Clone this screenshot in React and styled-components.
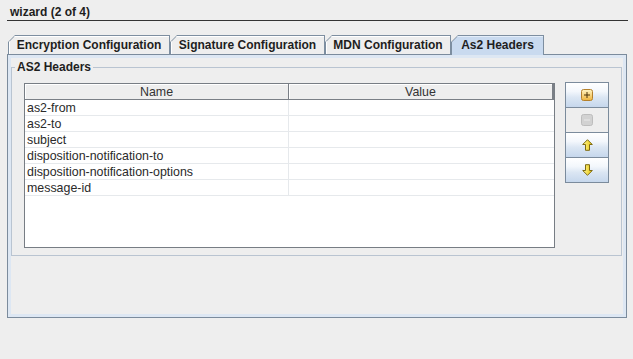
import React from 'react';
import styled, { createGlobalStyle } from 'styled-components';

const Global = createGlobalStyle`
  html, body { margin: 0; padding: 0; background: #eeeeee; }
  body { font-family: "Liberation Sans", Arial, sans-serif; font-size: 12px; color: #222; }
  * { box-sizing: border-box; }
`;

const Window = styled.div`
  width: 633px;
  height: 359px;
  background: #eeeeee;
  padding-left: 7px;
  overflow: hidden;
`;

const Title = styled.div`
  width: 621px;
  height: 21px;
  border-bottom: 1px solid #333333;
  padding: 5px 0 0 3px;
  line-height: 14px;
  font-weight: bold;
  color: #1e1e1e;
`;

const TabRow = styled.div`
  display: flex;
  align-items: flex-end;
  margin: 14px 0 0 1px;
  height: 19px;
`;

const Tab = styled.div`
  position: relative;
  z-index: ${p => (p.$selected ? 2 : 1)};
  width: ${p => p.$w}px;
  height: ${p => (p.$selected ? 20 : 19)}px;
  margin-bottom: ${p => (p.$selected ? -1 : 0)}px;
  padding: 1px 1px 0 1px;
  background: #7d8ea0;
  clip-path: polygon(0 7px, 7px 0, 100% 0, 100% 100%, 0 100%);
`;

const TabFace = styled.div`
  height: 100%;
  background: ${p => (p.$selected ? '#c9daef' : '#eeeeee')};
  clip-path: polygon(0 6px, 6px 0, 100% 0, 100% 100%, 0 100%);
  padding-top: 2px;
  line-height: 14px;
  font-weight: bold;
  text-align: center;
  color: #1e1e1e;
  white-space: nowrap;
  ${p => (p.$selected ? 'box-shadow: inset 0 1px 0 #e4eefa;' : 'box-shadow: inset 1px 1px 0 #ffffff;')}
`;

const Panel = styled.div`
  width: 620px;
  height: 264px;
  border: 1px solid #7b8b9c;
  padding: 3px;
  background: #eeeeee;
  box-shadow: inset 0 0 0 3px #dde7f3;
`;

const Group = styled.fieldset`
  margin: 2px 1px 0 0;
  padding: 0;
  border: 1px solid #b9c4d1;
  min-width: 0;
`;

const Legend = styled.legend`
  margin-left: 3px;
  padding: 0 2px;
  line-height: 14px;
  font-weight: bold;
  color: #1e1e1e;
`;

const GroupBody = styled.div`
  display: flex;
  align-items: flex-start;
  gap: 10px;
  padding: 9px 12px 7px 12px;
`;

const TableBox = styled.div`
  width: 531px;
  height: 165px;
  border: 1px solid #777d84;
  background: #ffffff;
  display: flex;
  flex-direction: column;
`;

const Grid = styled.div`
  display: grid;
  grid-template-columns: 264px 265px;
`;

const HeadCell = styled.div`
  height: 16px;
  background: #eeeeee;
  border-bottom: 1px solid #7a7f86;
  border-right: ${p => (p.$last ? 2 : 1)}px solid #7a7f86;
  box-shadow: inset 1px 1px 0 #ffffff;
  padding-top: 1px;
  line-height: 14px;
  font-size: 12.4px;
  text-align: center;
  color: #333333;
`;

const Cell = styled.div`
  height: 16px;
  border-bottom: 1px solid #e6e9ec;
  border-right: ${p => (p.$last ? 0 : 1)}px solid #e6e9ec;
  padding: 1px 0 0 2px;
  line-height: 14px;
  font-size: 12.4px;
  color: #2a2a2a;
  white-space: nowrap;
  overflow: hidden;
`;

const ButtonColumn = styled.div`
  display: flex;
  flex-direction: column;
  margin-top: -1px;
  width: 44px;
`;

const ToolButton = styled.button`
  width: 44px;
  height: 26px;
  margin: 0;
  padding: 0;
  border: 1px solid #7b8b9c;
  display: flex;
  align-items: center;
  justify-content: center;
  background: ${p =>
    p.disabled
      ? '#eeeeee'
      : 'linear-gradient(to bottom, #ffffff 0%, #f3f7fc 35%, #dbe6f3 60%, #c6d7ec 100%)'};
  & + & {
    border-top: 0;
    height: 25px;
  }
`;

const PlusIcon = () => (
  <svg width="12" height="12" viewBox="0 0 12 12">
    <defs>
      <linearGradient id="pg" x1="0" y1="0" x2="0" y2="1">
        <stop offset="0" stopColor="#fff4c4" />
        <stop offset="1" stopColor="#efb43c" />
      </linearGradient>
    </defs>
    <rect x="0.5" y="0.5" width="11" height="11" rx="2" fill="url(#pg)" stroke="#b4802c" />
    <path d="M6 3v6M3 6h6" stroke="#4a3208" strokeWidth="1" />
  </svg>
);

const MinusIcon = () => (
  <svg width="12" height="12" viewBox="0 0 12 12">
    <rect x="0.5" y="0.5" width="11" height="11" rx="2" fill="#d2d2d2" stroke="#bdbdbd" />
    <path d="M3 6h6" stroke="#e9e9e9" strokeWidth="1" />
  </svg>
);

const ArrowIcon = ({ down }) => (
  <svg width="11" height="12" viewBox="0 0 11 12" style={down ? { transform: 'scaleY(-1)' } : undefined}>
    <defs>
      <linearGradient id={down ? 'ag2' : 'ag1'} x1="0" y1="0" x2="1" y2="0">
        <stop offset="0" stopColor="#fff9a0" />
        <stop offset="1" stopColor="#e8c200" />
      </linearGradient>
    </defs>
    <path
      d="M5.5 0.7 L10.3 5.5 H7.5 V11.3 H3.5 V5.5 H0.7 Z"
      fill={`url(#${down ? 'ag2' : 'ag1'})`}
      stroke="#7d6a12"
      strokeWidth="1"
      strokeLinejoin="round"
    />
  </svg>
);

const tabs = [
  { label: 'Encryption Configuration', w: 162 },
  { label: 'Signature Configuration', w: 155 },
  { label: 'MDN Configuration', w: 126 },
  { label: 'As2 Headers', w: 93, selected: true },
];

const rows = [
  'as2-from',
  'as2-to',
  'subject',
  'disposition-notification-to',
  'disposition-notification-options',
  'message-id',
];

export default function App() {
  return (
    <>
      <Global />
      <Window>
        <Title>wizard (2 of 4)</Title>
        <TabRow>
          {tabs.map(t => (
            <Tab key={t.label} $w={t.w} $selected={t.selected}>
              <TabFace $selected={t.selected}>{t.label}</TabFace>
            </Tab>
          ))}
        </TabRow>
        <Panel>
          <Group>
            <Legend>AS2 Headers</Legend>
            <GroupBody>
              <TableBox>
                <Grid>
                  <HeadCell>Name</HeadCell>
                  <HeadCell $last>Value</HeadCell>
                  {rows.map(r => (
                    <React.Fragment key={r}>
                      <Cell>{r}</Cell>
                      <Cell $last />
                    </React.Fragment>
                  ))}
                </Grid>
              </TableBox>
              <ButtonColumn>
                <ToolButton><PlusIcon /></ToolButton>
                <ToolButton disabled><MinusIcon /></ToolButton>
                <ToolButton><ArrowIcon /></ToolButton>
                <ToolButton><ArrowIcon down /></ToolButton>
              </ButtonColumn>
            </GroupBody>
          </Group>
        </Panel>
      </Window>
    </>
  );
}
